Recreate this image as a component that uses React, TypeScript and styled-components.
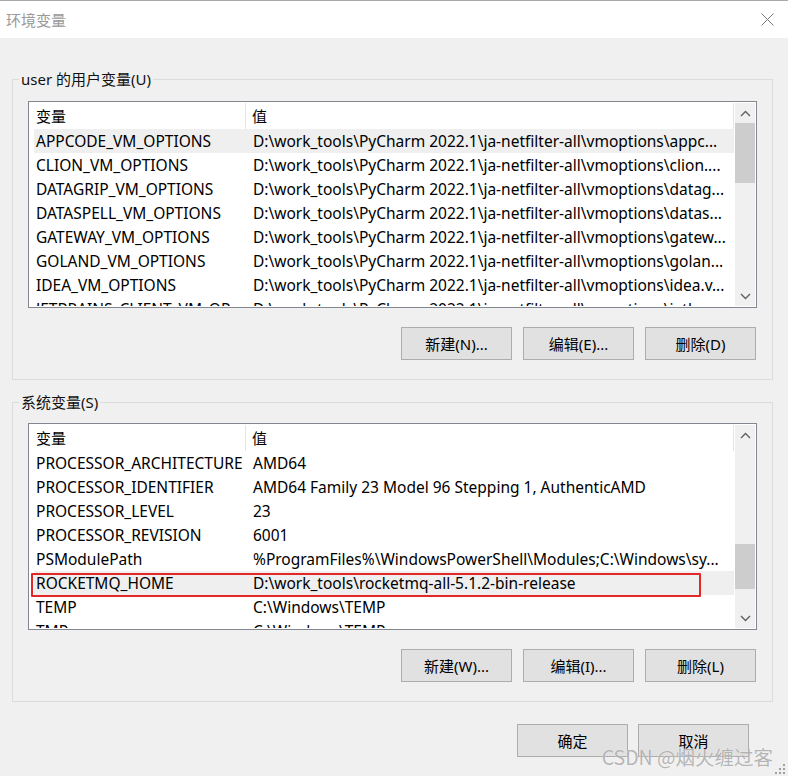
import React from "react";
import styled, { createGlobalStyle } from "styled-components";

const GlobalStyle = createGlobalStyle`
  html, body {
    margin: 0;
    padding: 0;
    background: #f0f0f0;
  }
  body {
    font-family: "Noto Sans", "Noto Sans CJK SC", sans-serif;
    font-size: 15px;
    color: #000;
  }
  * { box-sizing: border-box; }
`;

const Window = styled.div`
  position: relative;
  width: 788px;
  height: 776px;
  background: #f0f0f0;
  overflow: hidden;
  display: flex;
  flex-direction: column;
`;

const TitleBar = styled.div`
  height: 38px;
  flex-shrink: 0;
  background: #ffffff;
  border-top: 1px solid #a9a9a9;
  display: flex;
  align-items: center;
  justify-content: space-between;
  padding: 0 14px 0 6px;
`;

const TitleText = styled.span`
  color: #999999;
  font-size: 15px;
  font-family: "Noto Sans CJK SC", sans-serif;
`;

const CloseIcon = styled.svg`
  width: 13px;
  height: 13px;
  display: block;
`;

const Body = styled.div`
  padding: 31px 15px 0 12px;
  display: flex;
  flex-direction: column;
`;

const Group = styled.fieldset<{ $gap?: number; $top?: number }>`
  margin: ${(p) => p.$gap ?? 0}px 0 0 0;
  min-width: 0;
  border: 1px solid #dcdcdc;
  padding: ${(p) => p.$top ?? 12}px 15px 19px 15px;
  display: flex;
  flex-direction: column;
`;

const Legend = styled.legend`
  padding: 0 2px;
  margin-left: -9px;
  font-size: 15px;
  line-height: 20px;
  color: #111;
  font-family: "Noto Sans", "Noto Sans CJK SC", sans-serif;
`;

const ListView = styled.div`
  height: 207px;
  border: 1px solid #828790;
  padding: 1px;
  background: #ffffff;
  display: flex;
`;

const ListBody = styled.div`
  flex: 1;
  min-width: 0;
  padding: 0 1px 0 4px;
  overflow: hidden;
  display: flex;
  flex-direction: column;
`;

const HeaderRow = styled.div`
  display: grid;
  grid-template-columns: 212px 1fr;
  height: 26px;
  flex-shrink: 0;
  border-right: 1px solid #e5e5e5;
`;

const HeaderCell = styled.div<{ $first?: boolean }>`
  line-height: 26px;
  padding-left: ${(p) => (p.$first ? 2 : 6)}px;
  border-right: ${(p) => (p.$first ? "1px solid #e5e5e5" : "none")};
  font-family: "Noto Sans CJK SC", sans-serif;
  font-size: 15px;
  white-space: nowrap;
  overflow: hidden;
`;

const Row = styled.div<{ $selected?: boolean }>`
  position: relative;
  display: grid;
  grid-template-columns: 212px 1fr;
  height: 24px;
  flex-shrink: 0;
  background: ${(p) => (p.$selected ? "#efefef" : "transparent")};
`;

const Cell = styled.div<{ $first?: boolean }>`
  line-height: 24px;
  font-size: 15.5px;
  padding-left: ${(p) => (p.$first ? 2 : 7)}px;
  white-space: nowrap;
  overflow: hidden;
  color: #000;
`;

const MarkBox = styled.div`
  position: absolute;
  left: -3px;
  top: 2px;
  width: 670px;
  height: 24px;
  border: 2px solid #e32626;
  border-radius: 1px;
  pointer-events: none;
`;

const ScrollBar = styled.div`
  width: 20px;
  flex-shrink: 0;
  background: #f0f0f0;
  display: flex;
  flex-direction: column;
`;

const ArrowButton = styled.div`
  height: 20px;
  flex-shrink: 0;
  display: flex;
  align-items: center;
  justify-content: center;
`;

const Track = styled.div`
  flex: 1;
  display: flex;
  flex-direction: column;
`;

const Thumb = styled.div<{ $offset: number; $size: number }>`
  margin-top: ${(p) => p.$offset}px;
  height: ${(p) => p.$size}px;
  background: #cdcdcd;
`;

const ButtonRow = styled.div`
  display: flex;
  justify-content: flex-end;
  gap: 11px;
  margin-top: 19px;
  padding-right: 1px;
`;

const Button = styled.button`
  width: 111px;
  height: 33px;
  background: #e1e1e1;
  border: 1px solid #adadad;
  border-radius: 0;
  font-family: "Noto Sans", "Noto Sans CJK SC", sans-serif;
  font-size: 15px;
  color: #000;
  padding: 0;
`;

const Footer = styled.div`
  display: flex;
  justify-content: flex-end;
  gap: 10px;
  margin-top: 22px;
  padding-right: 24px;
`;

const Watermark = styled.div`
  position: absolute;
  right: 15px;
  bottom: 5px;
  font-family: "Noto Sans CJK SC", sans-serif;
  font-size: 19.5px;
  color: rgba(120, 120, 120, 0.55);
  text-shadow: 0 0 1px rgba(255, 255, 255, 0.9);
  pointer-events: none;
  white-space: nowrap;
`;

const Grip = styled.svg`
  position: absolute;
  right: 2px;
  bottom: 1px;
  width: 12px;
  height: 12px;
`;

const Chevron = ({ up }: { up?: boolean }) => (
  <svg width="11" height="7" viewBox="0 0 11 7">
    <polyline
      points={up ? "1,6 5.5,1.5 10,6" : "1,1 5.5,5.5 10,1"}
      fill="none"
      stroke="#606060"
      strokeWidth="1.4"
    />
  </svg>
);

type Item = { name: string; value: string; selected?: boolean; marked?: boolean };

const P = "D:\\work_tools\\PyCharm 2022.1\\ja-netfilter-all\\vmoptions\\";

const userVars: Item[] = [
  { name: "APPCODE_VM_OPTIONS", value: P + "appc...", selected: true },
  { name: "CLION_VM_OPTIONS", value: P + "clion...." },
  { name: "DATAGRIP_VM_OPTIONS", value: P + "datag..." },
  { name: "DATASPELL_VM_OPTIONS", value: P + "datas..." },
  { name: "GATEWAY_VM_OPTIONS", value: P + "gatew..." },
  { name: "GOLAND_VM_OPTIONS", value: P + "golan..." },
  { name: "IDEA_VM_OPTIONS", value: P + "idea.v..." },
  { name: "JETBRAINS_CLIENT_VM_OP...", value: P + "jetbr..." },
];

const sysVars: Item[] = [
  { name: "PROCESSOR_ARCHITECTURE", value: "AMD64" },
  { name: "PROCESSOR_IDENTIFIER", value: "AMD64 Family 23 Model 96 Stepping 1, AuthenticAMD" },
  { name: "PROCESSOR_LEVEL", value: "23" },
  { name: "PROCESSOR_REVISION", value: "6001" },
  { name: "PSModulePath", value: "%ProgramFiles%\\WindowsPowerShell\\Modules;C:\\Windows\\sy..." },
  { name: "ROCKETMQ_HOME", value: "D:\\work_tools\\rocketmq-all-5.1.2-bin-release", selected: true, marked: true },
  { name: "TEMP", value: "C:\\Windows\\TEMP" },
  { name: "TMP", value: "C:\\Windows\\TEMP" },
];

const VarList = ({ items, thumbOffset, thumbSize }: { items: Item[]; thumbOffset: number; thumbSize: number }) => (
  <ListView>
    <ListBody>
      <HeaderRow>
        <HeaderCell $first>变量</HeaderCell>
        <HeaderCell>值</HeaderCell>
      </HeaderRow>
      {items.map((it) => (
        <Row key={it.name} $selected={it.selected}>
          <Cell $first>{it.name}</Cell>
          <Cell>{it.value}</Cell>
          {it.marked && <MarkBox />}
        </Row>
      ))}
    </ListBody>
    <ScrollBar>
      <ArrowButton>
        <Chevron up />
      </ArrowButton>
      <Track>
        <Thumb $offset={thumbOffset} $size={thumbSize} />
      </Track>
      <ArrowButton>
        <Chevron />
      </ArrowButton>
    </ScrollBar>
  </ListView>
);

export default function App() {
  return (
    <Window>
      <GlobalStyle />
      <TitleBar>
        <TitleText>环境变量</TitleText>
        <CloseIcon viewBox="0 0 13 13">
          <path d="M0.5 0.5 L12.5 12.5 M12.5 0.5 L0.5 12.5" stroke="#777" strokeWidth="1" fill="none" />
        </CloseIcon>
      </TitleBar>
      <Body>
        <Group>
          <Legend>user 的用户变量(U)</Legend>
          <VarList items={userVars} thumbOffset={0} thumbSize={60} />
          <ButtonRow>
            <Button>新建(N)...</Button>
            <Button>编辑(E)...</Button>
            <Button>删除(D)</Button>
          </ButtonRow>
        </Group>
        <Group $gap={12} $top={11}>
          <Legend>系统变量(S)</Legend>
          <VarList items={sysVars} thumbOffset={99} thumbSize={45} />
          <ButtonRow>
            <Button>新建(W)...</Button>
            <Button>编辑(I)...</Button>
            <Button>删除(L)</Button>
          </ButtonRow>
        </Group>
        <Footer>
          <Button>确定</Button>
          <Button>取消</Button>
        </Footer>
      </Body>
      <Watermark>CSDN @烟火缠过客</Watermark>
      <Grip viewBox="0 0 12 12">
        <rect x="9" y="1" width="2" height="2" fill="#a0a0a0" />
        <rect x="5" y="5" width="2" height="2" fill="#a0a0a0" />
        <rect x="9" y="5" width="2" height="2" fill="#a0a0a0" />
        <rect x="1" y="9" width="2" height="2" fill="#a0a0a0" />
        <rect x="5" y="9" width="2" height="2" fill="#a0a0a0" />
        <rect x="9" y="9" width="2" height="2" fill="#a0a0a0" />
      </Grip>
    </Window>
  );
}
